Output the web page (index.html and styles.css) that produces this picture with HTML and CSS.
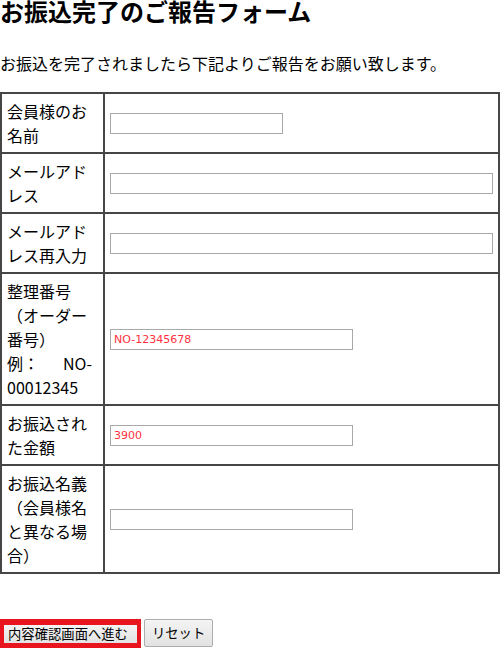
FILE: index.html
```html
<!DOCTYPE html>
<html lang="ja">
<head>
<meta charset="utf-8">
<title>お振込完了のご報告フォーム</title>
<link rel="stylesheet" href="styles.css">
</head>
<body>
<h2 class="title">お振込完了のご報告フォーム</h2>
<p class="lead">お振込を完了されましたら下記よりご報告をお願い致します。</p>
<form class="report-form">
  <table class="form-table">
    <tr>
      <td class="label">会員様のお名前</td>
      <td class="field"><input type="text" class="inp inp-short"></td>
    </tr>
    <tr>
      <td class="label">メールアドレス</td>
      <td class="field"><input type="text" class="inp inp-full"></td>
    </tr>
    <tr>
      <td class="label">メールアドレス再入力</td>
      <td class="field"><input type="text" class="inp inp-full"></td>
    </tr>
    <tr>
      <td class="label">整理番号（オーダー番号）<span class="example"><span>例：</span><span>NO-</span></span>00012345</td>
      <td class="field"><input type="text" class="inp inp-mid" value="NO-12345678"></td>
    </tr>
    <tr>
      <td class="label">お振込された金額</td>
      <td class="field"><input type="text" class="inp inp-mid" value="3900"></td>
    </tr>
    <tr>
      <td class="label">お振込名義（会員様名と異なる場合）</td>
      <td class="field"><input type="text" class="inp inp-mid"></td>
    </tr>
  </table>
  <div class="btn-row">
    <button type="submit" class="btn btn-submit">内容確認画面へ進む</button>
    <button type="reset" class="btn btn-reset">リセット</button>
  </div>
</form>
</body>
</html>
```
FILE: styles.css
```css
html, body {
  margin: 0;
  padding: 0;
  background: #fff;
}
body {
  font-family: "Noto Sans CJK JP", "Noto Sans", sans-serif;
  color: #000;
  font-size: 16px;
}
.title {
  margin: 0;
  font-size: 24px;
  line-height: 22px;
  font-weight: 700;
}
.lead {
  margin: 29px 0 17px;
  font-size: 16px;
  line-height: 24px;
}
.report-form {
  margin: 0;
}
.form-table {
  width: 500px;
  table-layout: fixed;
  border-collapse: separate;
  border-spacing: 0;
  border-left: 2px solid #464646;
  border-top: 2px solid #464646;
}
.form-table td {
  border-right: 2px solid #464646;
  border-bottom: 2px solid #464646;
  padding: 5px;
  font-size: 16px;
  line-height: 24px;
}
.form-table td.label {
  width: 91px;
  text-align: left;
  vertical-align: top;
}
.example {
  display: flex;
  justify-content: space-between;
  padding-right: 6px;
}
.form-table td.field {
  vertical-align: middle;
}
.inp {
  box-sizing: border-box;
  display: block;
  height: 21px;
  margin: 0;
  padding: 0 3px;
  border: 1px solid #a9a9a9;
  font-family: "DejaVu Sans", sans-serif;
  font-size: 11px;
  color: #ff3040;
  background: #fff;
}
.inp-short { width: 173px; }
.inp-mid { width: 243px; }
.inp-full { width: 100%; }
.btn-row {
  display: flex;
  align-items: flex-start;
  gap: 3px;
  margin-top: 45px;
}
.btn {
  font-family: "Noto Sans CJK JP", sans-serif;
  font-size: 13.33px;
  line-height: 18px;
  color: #000;
  background: linear-gradient(#f4f4f4, #e2e2e2);
  margin: 0;
  cursor: pointer;
}
.btn-submit {
  border: 4px solid #e8141e;
  border-top-width: 6px;
  border-bottom-width: 5px;
  padding: 0 9px 0 4px;
  height: 29px;
}
.btn-reset {
  border: 1px solid #adadad;
  border-radius: 2px;
  padding: 0 7px;
  height: 28px;
}
```
